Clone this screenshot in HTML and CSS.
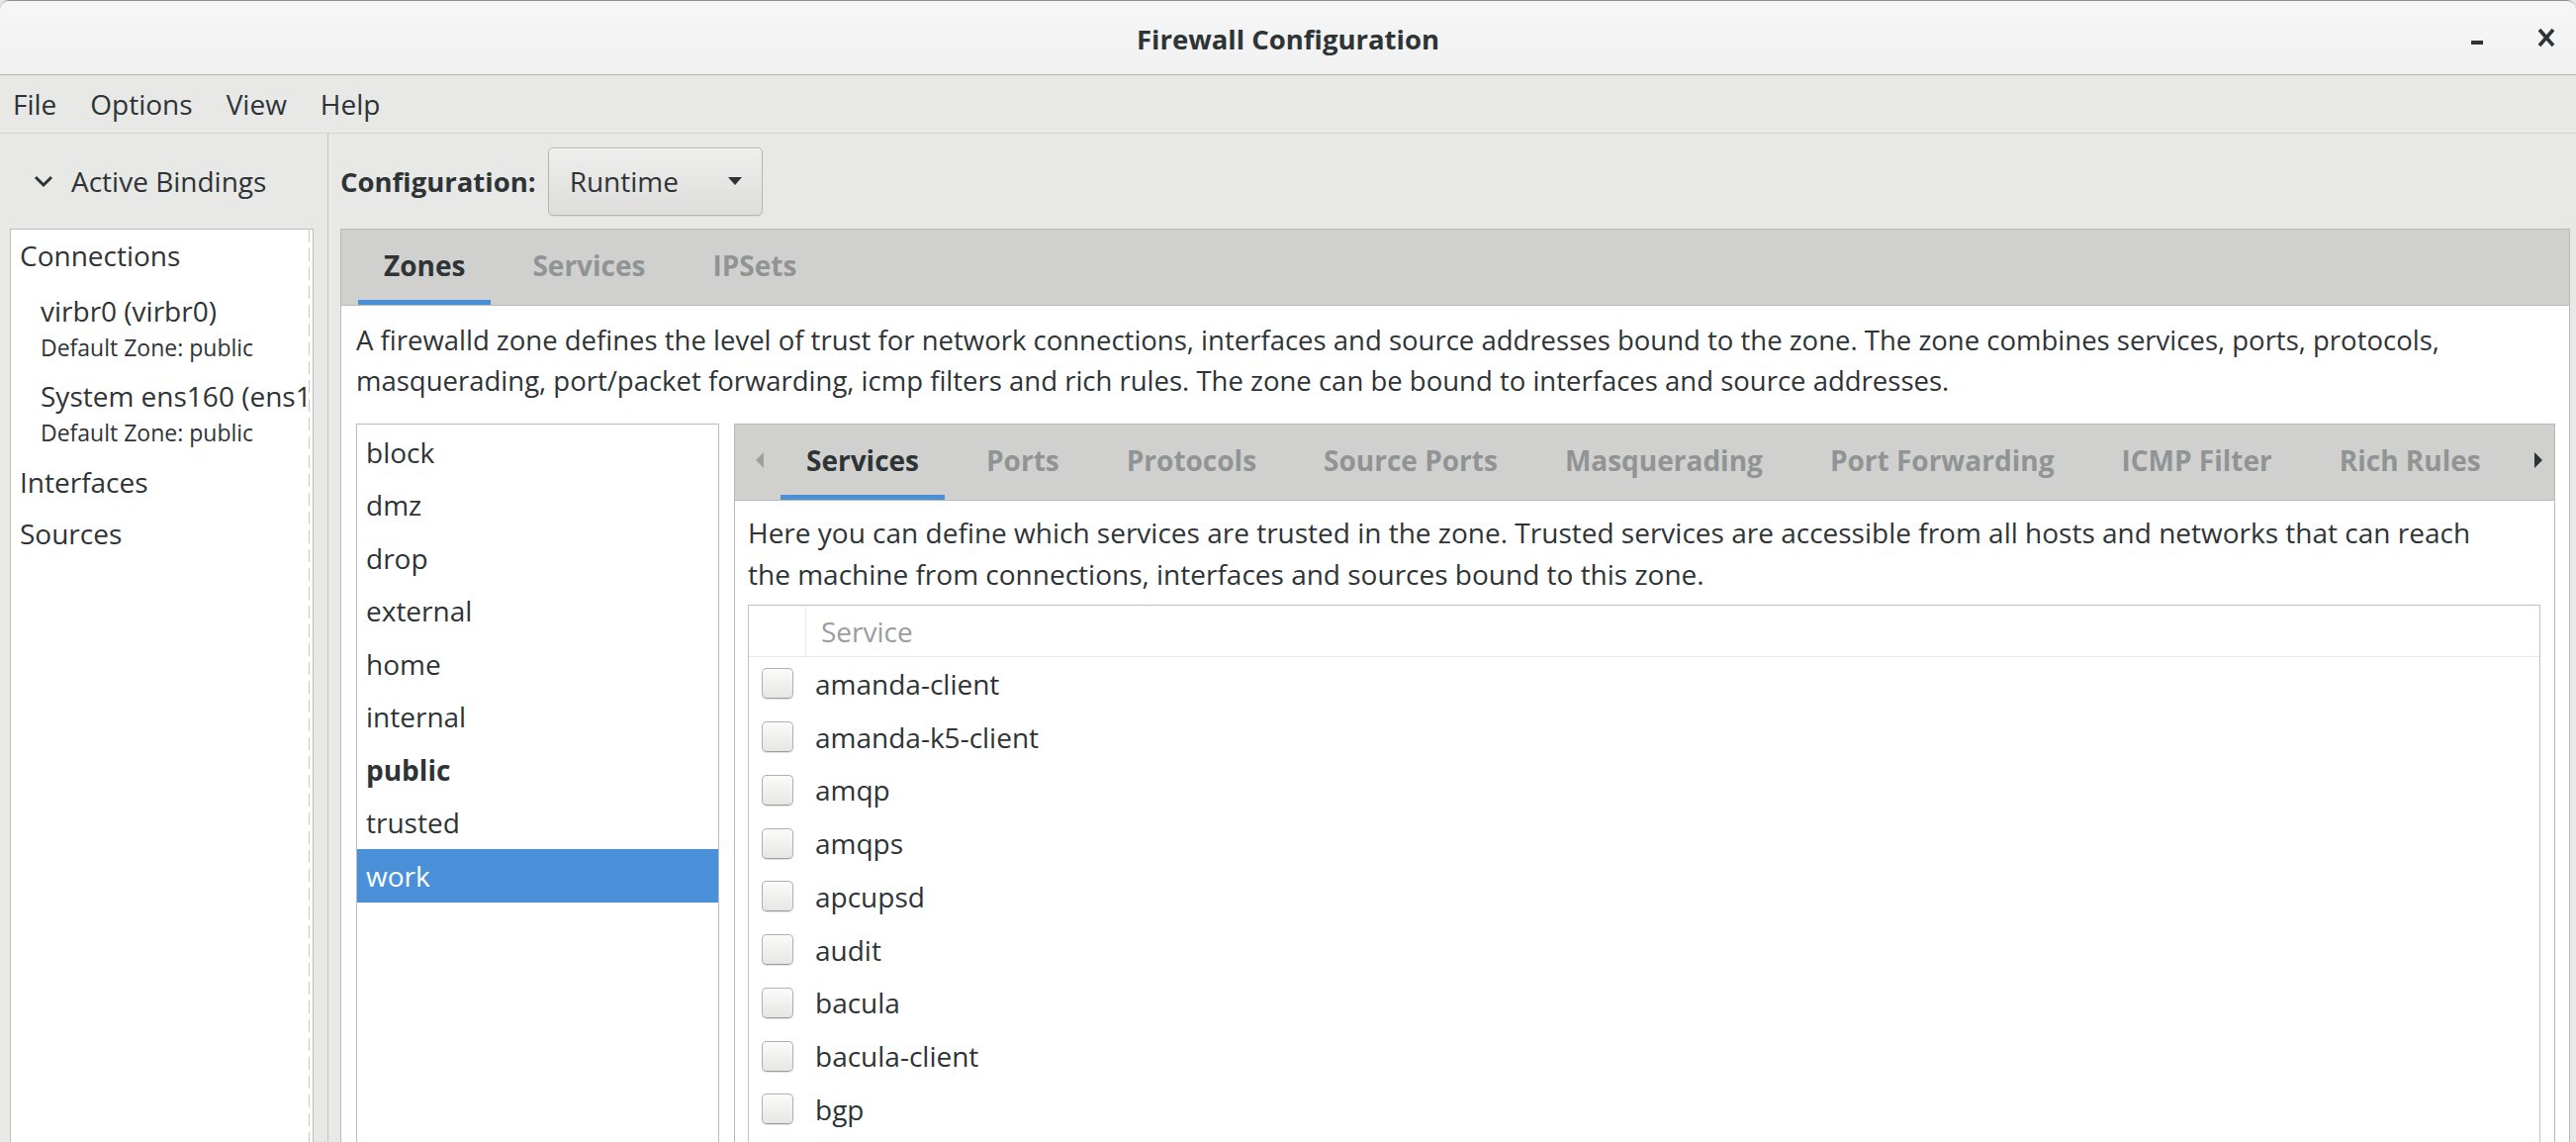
FILE: index.html
```html
<!DOCTYPE html>
<html lang="en">
<head>
<meta charset="utf-8">
<title>Firewall Configuration</title>
<link rel="stylesheet" href="styles.css">
</head>
<body>
<header class="titlebar">
  <div class="title">Firewall Configuration</div>
  <div class="wm-controls">
    <svg class="wm-min" width="14" height="6" viewBox="0 0 14 6"><rect x="1" y="1" width="12" height="4" fill="#2e3436"/></svg>
    <svg class="wm-close" width="18" height="20" viewBox="0 0 18 20"><path d="M2 2 L16 18 M16 2 L2 18" stroke="#2e3436" stroke-width="3.6" stroke-linecap="butt" fill="none"/></svg>
  </div>
</header>
<nav class="menubar">
  <span class="menu-item">File</span>
  <span class="menu-item">Options</span>
  <span class="menu-item">View</span>
  <span class="menu-item">Help</span>
</nav>
<div class="main">
  <aside class="bindings">
    <div class="bind-head">
      <svg class="chev" width="22" height="14" viewBox="0 0 22 14"><path d="M3 3 L11 11 L19 3" stroke="#2e3436" stroke-width="3" fill="none"/></svg>
      <span>Active Bindings</span>
    </div>
    <div class="bind-panel">
      <div class="bind-cat">Connections</div>
      <div class="bind-group">
        <div class="bind-conn">
          <div class="conn-name">virbr0 (virbr0)</div>
          <div class="conn-zone">Default Zone: public</div>
        </div>
        <div class="bind-conn">
          <div class="conn-name">System ens160 (ens160)</div>
          <div class="conn-zone">Default Zone: public</div>
        </div>
      </div>
      <div class="bind-cat">Interfaces</div>
      <div class="bind-cat">Sources</div>
    </div>
  </aside>
  <div class="pane-sep"></div>
  <main class="content">
    <div class="config-row">
      <span class="config-label">Configuration:</span>
      <div class="combo">
        <span>Runtime</span>
        <svg width="16" height="10" viewBox="0 0 16 10"><path d="M1 1 L15 1 L8 9 Z" fill="#2e3436"/></svg>
      </div>
    </div>
    <section class="notebook outer">
      <div class="nb-header outer-header">
        <div class="tab active">Zones</div>
        <div class="tab">Services</div>
        <div class="tab">IPSets</div>
      </div>
      <div class="nb-page outer-page">
        <p class="desc outer-desc">A firewalld zone defines the level of trust for network connections, interfaces and source addresses bound to the zone. The zone combines services, ports, protocols,<br>masquerading, port/packet forwarding, icmp filters and rich rules. The zone can be bound to interfaces and source addresses.</p>
        <div class="zone-split">
          <ul class="zone-list">
            <li class="zone">block</li>
            <li class="zone">dmz</li>
            <li class="zone">drop</li>
            <li class="zone">external</li>
            <li class="zone">home</li>
            <li class="zone">internal</li>
            <li class="zone default">public</li>
            <li class="zone">trusted</li>
            <li class="zone selected">work</li>
          </ul>
          <section class="notebook inner">
            <div class="nb-header inner-header">
              <div class="nb-arrow left"><svg width="10" height="18" viewBox="0 0 10 18"><path d="M9 1 L1 9 L9 17 Z" fill="#9c9f9f"/></svg></div>
              <div class="tab active">Services</div>
              <div class="tab">Ports</div>
              <div class="tab">Protocols</div>
              <div class="tab">Source Ports</div>
              <div class="tab">Masquerading</div>
              <div class="tab">Port Forwarding</div>
              <div class="tab">ICMP Filter</div>
              <div class="tab">Rich Rules</div>
              <div class="nb-arrow right"><svg width="10" height="18" viewBox="0 0 10 18"><path d="M1 1 L9 9 L1 17 Z" fill="#2e3436"/></svg></div>
            </div>
            <div class="nb-page inner-page">
              <p class="desc inner-desc">Here you can define which services are trusted in the zone. Trusted services are accessible from all hosts and networks that can reach<br>the machine from connections, interfaces and sources bound to this zone.</p>
              <div class="svc-table">
                <div class="svc-head">
                  <div class="head-check"></div>
                  <div class="head-name">Service</div>
                </div>
                <div class="svc-row"><span class="check"></span><span>amanda-client</span></div>
                <div class="svc-row"><span class="check"></span><span>amanda-k5-client</span></div>
                <div class="svc-row"><span class="check"></span><span>amqp</span></div>
                <div class="svc-row"><span class="check"></span><span>amqps</span></div>
                <div class="svc-row"><span class="check"></span><span>apcupsd</span></div>
                <div class="svc-row"><span class="check"></span><span>audit</span></div>
                <div class="svc-row"><span class="check"></span><span>bacula</span></div>
                <div class="svc-row"><span class="check"></span><span>bacula-client</span></div>
                <div class="svc-row"><span class="check"></span><span>bgp</span></div>
              </div>
            </div>
          </section>
        </div>
      </div>
    </section>
  </main>
</div>
</body>
</html>
```
FILE: styles.css
```css
* { box-sizing: border-box; margin: 0; padding: 0; }
html, body { width: 2604px; height: 1154px; overflow: hidden; }
body {
  font-family: "Open Sans", "Noto Sans", sans-serif;
  font-size: 28px;
  color: #2e3436;
  background: #e8e8e7;
  display: flex;
  flex-direction: column;
}

/* title bar */
.titlebar {
  flex: none;
  height: 76px;
  background: linear-gradient(#f6f6f6, #f1f1f1);
  border-top: 1px solid #8e8e8e;
  border-bottom: 1px solid #b4b4b0;
  border-radius: 9px 9px 0 0;
  display: grid;
  grid-template-columns: 1fr auto 1fr;
  align-items: center;
}
.title { grid-column: 2; font-weight: bold; font-size: 27.5px; padding-top: 2px; }
.wm-controls {
  grid-column: 3;
  justify-self: end;
  display: flex;
  align-items: center;
  gap: 54px;
  padding-right: 21px;
}
.wm-min { margin-top: 10px; }

/* menu bar */
.menubar {
  flex: none;
  height: 59px;
  border-bottom: 1px solid #d3d3d0;
  display: flex;
  align-items: center;
  gap: 34px;
  padding-left: 13px;
}

/* main area */
.main { flex: 1; display: flex; min-height: 0; }
.bindings { flex: none; width: 331px; display: flex; flex-direction: column; }
.bind-head {
  flex: none;
  height: 96px;
  display: flex;
  align-items: center;
  gap: 17px;
  padding-left: 33px;
}
.bind-panel {
  flex: 1;
  margin-left: 10px;
  width: 307px;
  border: 1px solid #bdbdb9;
  border-bottom: none;
  background-color: #fff;
  background-image: repeating-linear-gradient(to bottom, #c9c9c9 0 13px, transparent 13px 19px);
  background-size: 1px 100%;
  background-position: right 3px top;
  background-repeat: no-repeat;
  padding-left: 9px;
  overflow: hidden;
}
.bind-cat { height: 52px; line-height: 52px; white-space: nowrap; }
.bind-group { padding-bottom: 5px; }
.bind-conn { height: 86px; padding: 11px 0 0 21px; white-space: nowrap; overflow: hidden; margin-right: 7px; }
.conn-name { line-height: 38px; }
.conn-zone { line-height: 36px; font-size: 23px; }

.pane-sep { flex: none; width: 1px; background: #c3c3bf; }

.content {
  flex: 1;
  min-width: 0;
  display: flex;
  flex-direction: column;
  padding: 0 6px 0 12px;
}
.config-row {
  flex: none;
  height: 96px;
  display: flex;
  align-items: center;
  gap: 12px;
}
.config-label { font-weight: bold; font-size: 27.5px; }
.combo {
  width: 217px;
  height: 69px;
  border: 1px solid #b5b5b1;
  border-radius: 5px;
  background: linear-gradient(#eeeeec, #dddddb);
  box-shadow: inset 0 1px #fafafa, 0 1px 1px rgba(0,0,0,0.06);
  display: flex;
  align-items: center;
  justify-content: space-between;
  padding: 0 19px 0 21px;
}

/* notebooks */
.notebook {
  display: flex;
  flex-direction: column;
  border: 1px solid #b9b9b5;
  border-bottom: none;
  background: #fff;
  min-height: 0;
}
.outer { flex: 1; }
.nb-header {
  flex: none;
  height: 77px;
  background: #d0d0ce;
  border-bottom: 1px solid #b9b9b5;
  display: flex;
  align-items: stretch;
}
.outer-header { padding-left: 17px; gap: 16px; }
.inner-header { gap: 16px; }
.tab {
  display: flex;
  align-items: center;
  padding: 0 26px;
  border-bottom: 5px solid transparent;
  font-weight: bold;
  color: #919494;
  white-space: nowrap;
}
.tab.active { color: #2e3436; border-bottom-color: #4a90d9; }
.nb-arrow {
  width: 50px;
  display: flex;
  align-items: center;
  justify-content: center;
  padding-bottom: 5px;
}
.nb-arrow.left { margin-right: -10px; width: 51px; justify-content: flex-start; padding-left: 20px; }
.nb-arrow.right { margin-left: auto; }

.nb-page { flex: 1; display: flex; flex-direction: column; min-height: 0; }
.outer-page { padding: 14px 14px 0 15px; }
.desc { white-space: nowrap; }
.outer-desc { line-height: 41px; font-size: 27.5px; }
.zone-split {
  flex: 1;
  display: flex;
  gap: 15px;
  margin-top: 23px;
  min-height: 0;
}
.zone-list {
  list-style: none;
  flex: none;
  width: 367px;
  border: 1px solid #bcbcb8;
  border-bottom: none;
  padding-top: 1px;
  background: #fff;
}
.zone {
  height: 53.5px;
  display: flex;
  align-items: center;
  padding-left: 9px;
}
.zone.default { font-weight: bold; }
.zone.selected { background: #4a90d9; color: #fff; }

.inner { flex: 1; min-width: 0; }
.inner-page { padding: 11px 14px 0 13px; }
.inner-desc { line-height: 42px; }
.svc-table {
  flex: 1;
  margin-top: 10px;
  border: 1px solid #c0c0bc;
  border-bottom: none;
  background: #fff;
  overflow: hidden;
}
.svc-head {
  height: 52px;
  display: flex;
  border-bottom: 1px solid #e8e8e6;
}
.head-check { width: 58px; border-right: 1px solid #e8e8e6; }
.head-name {
  display: flex;
  align-items: center;
  padding-left: 15px;
  color: #9a9d9d;
}
.svc-row {
  height: 53.75px;
  display: flex;
  align-items: center;
  padding-left: 13px;
}
.check {
  flex: none;
  width: 32px;
  height: 31px;
  margin-right: 22px;
  border: 1px solid #b0b0ac;
  border-bottom-color: #9c9c98;
  border-radius: 5px;
  background: linear-gradient(#fbfbfb, #e6e6e4);
  box-shadow: 0 1px 1px rgba(0,0,0,0.12);
}
```
